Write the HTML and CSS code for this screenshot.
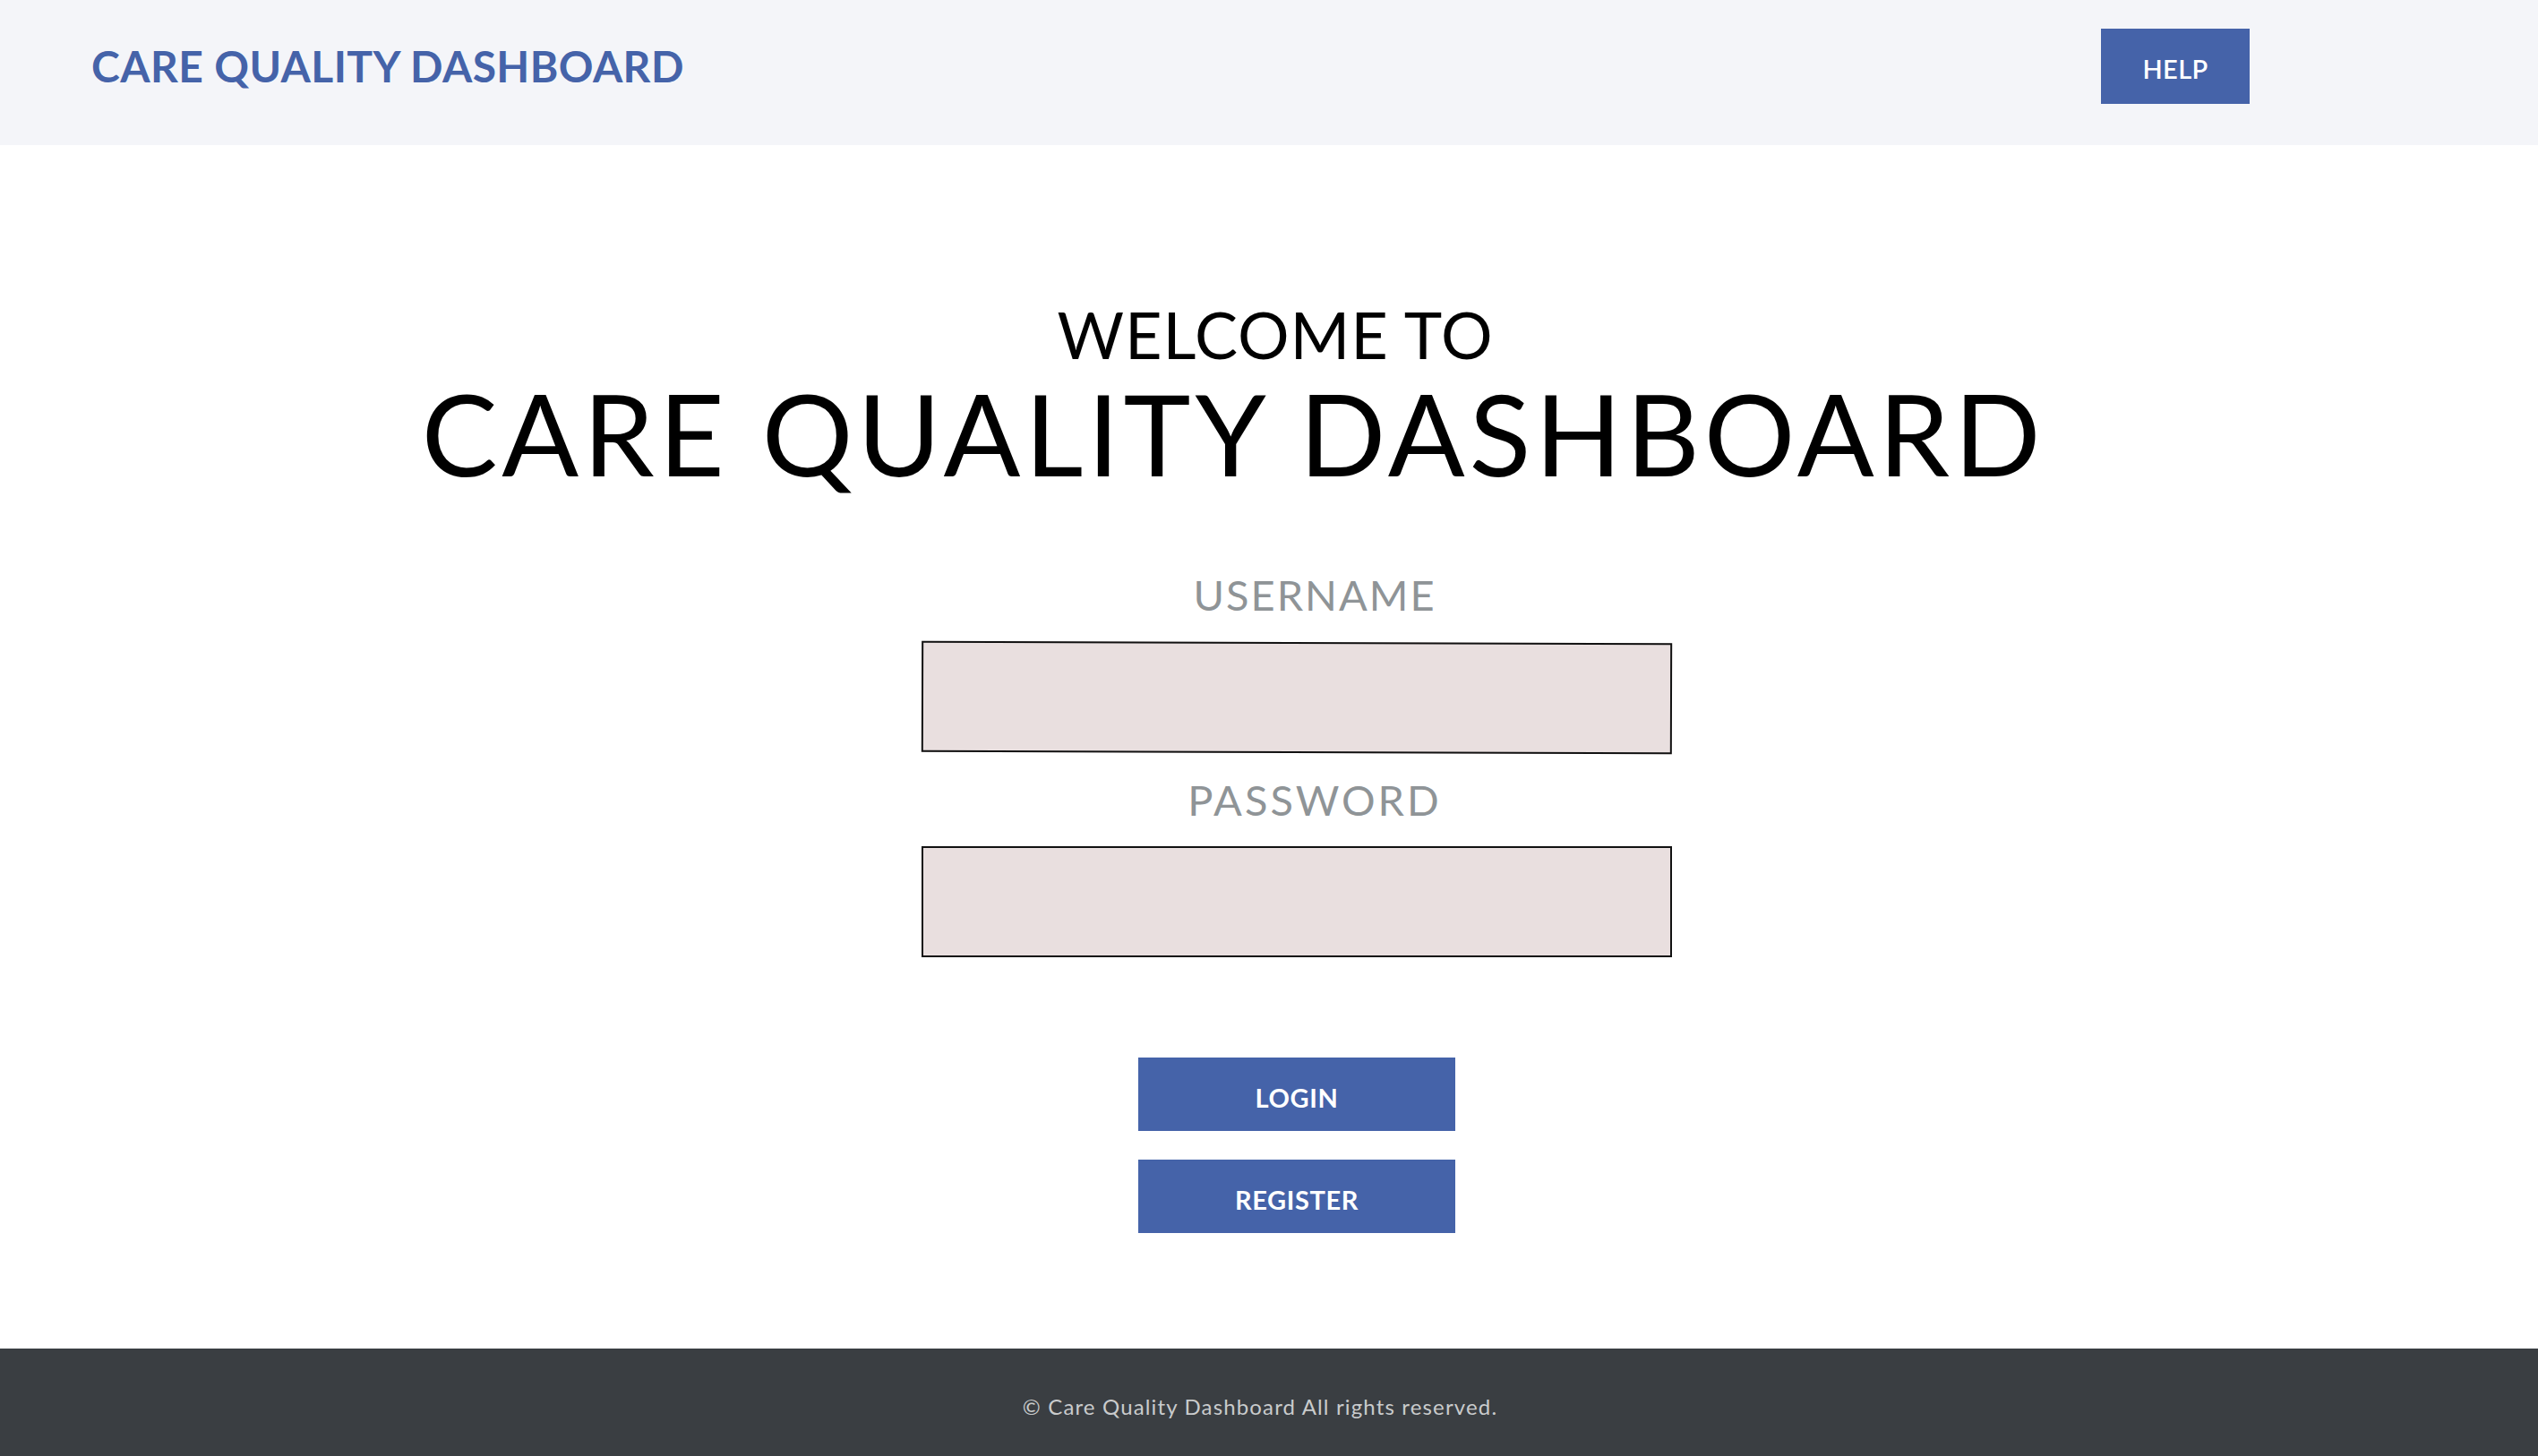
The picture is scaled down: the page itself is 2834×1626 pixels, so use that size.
FILE: index.html
```html
<!DOCTYPE html>
<html lang="en">
<head>
<meta charset="utf-8">
<title>Care Quality Dashboard</title>
<link rel="stylesheet" href="styles.css">
</head>
<body>
<div class="page">
  <header class="topbar">
    <div class="brand">CARE QUALITY DASHBOARD</div>
    <button class="help-btn" type="button">HELP</button>
  </header>
  <main class="main">
    <div class="welcome">WELCOME TO</div>
    <h1 class="title">CARE QUALITY DASHBOARD</h1>
    <form class="login-form">
      <label class="field-label" for="username">USERNAME</label>
      <input class="field-input field-input-tilt" id="username" type="text">
      <label class="field-label field-label-pw" for="password">PASSWORD</label>
      <input class="field-input" id="password" type="password">
      <div class="actions">
        <button class="action-btn" type="button">LOGIN</button>
        <button class="action-btn" type="button">REGISTER</button>
      </div>
    </form>
  </main>
  <footer class="footer">
    <p class="footer-text">© Care Quality Dashboard All rights reserved.</p>
  </footer>
</div>
</body>
</html>
```

FILE: styles.css
```css
* { box-sizing: border-box; }

html, body {
  margin: 0;
  padding: 0;
}

body {
  font-family: Lato, "Open Sans", sans-serif;
  background: #ffffff;
  color: #000;
}

.page {
  min-height: 100vh;
  display: flex;
  flex-direction: column;
}

.topbar {
  height: 162px;
  background: #f4f5f9;
  display: flex;
  align-items: center;
  justify-content: space-between;
  padding: 0 322px 14px 102px;
}

.brand {
  font-family: Lato, sans-serif;
  font-weight: 700;
  font-size: 48px;
  line-height: 1;
  letter-spacing: 0.4px;
  color: #4563a9;
}

.help-btn {
  width: 166px;
  height: 84px;
  border: none;
  background: #4563a9;
  color: #fff;
  font-family: Lato, sans-serif;
  font-weight: 600;
  font-size: 29px;
  letter-spacing: 0.4px;
  padding: 4px 0 0;
}

.main {
  flex: 1;
  display: flex;
  flex-direction: column;
  align-items: stretch;
  padding-top: 175px;
}

.welcome {
  text-align: center;
  font-size: 72px;
  line-height: 1;
  letter-spacing: 0.9px;
  padding-left: 14px;
}

.title {
  margin: 11px 0 0;
  text-align: center;
  font-weight: 400;
  font-size: 127px;
  line-height: 1;
  letter-spacing: 4.8px;
  padding-right: 80px;
}

.login-form {
  margin-top: 94px;
  display: flex;
  flex-direction: column;
  align-items: center;
  padding-left: 62px;
}

.field-label {
  display: block;
  font-size: 47px;
  line-height: 1;
  letter-spacing: 2px;
  color: #8f9497;
  padding-left: 40px;
}

.field-label-pw {
  margin-top: 29px;
  letter-spacing: 3px;
}

.field-input {
  display: block;
  width: 838px;
  height: 124px;
  margin-top: 29px;
  background: #e9dfdf;
  border: 2px solid #111;
  border-radius: 0;
  outline: none;
}

.field-input-tilt {
  transform: rotate(0.17deg);
}

.field-label-pw + .field-input {
  margin-top: 28px;
}

.actions {
  margin-top: 112px;
  display: flex;
  flex-direction: column;
  gap: 32px;
}

.action-btn {
  width: 354px;
  height: 82px;
  border: none;
  background: #4563a9;
  color: #fff;
  font-family: Lato, sans-serif;
  font-weight: 700;
  font-size: 29px;
  letter-spacing: 0.6px;
  padding: 6px 0 0;
}

.footer {
  height: 120px;
  background: #3a3e42;
  padding-top: 53px;
}

.footer-text {
  margin: 0;
  text-align: center;
  font-size: 24px;
  line-height: 1;
  letter-spacing: 1.15px;
  color: #c9cbcc;
  padding-right: 20px;
}
```
